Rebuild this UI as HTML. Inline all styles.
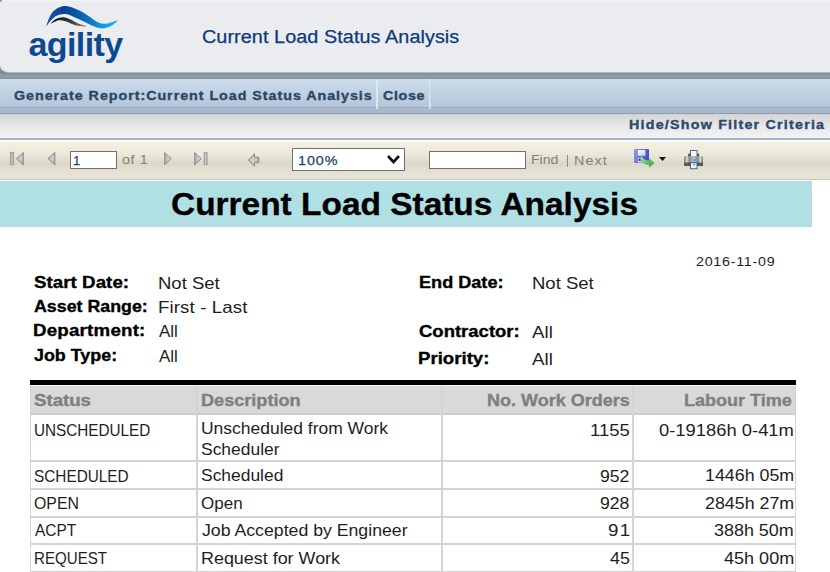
<!DOCTYPE html>
<html><head><meta charset="utf-8"><style>
html,body{margin:0;padding:0;}
body{width:830px;height:572px;overflow:hidden;position:relative;background:#fff;font-family:"Liberation Sans", sans-serif;}
.t{position:absolute;white-space:pre;transform-origin:0 0;}
.b{-webkit-text-stroke:0.35px currentColor;}
.m{-webkit-text-stroke:0.25px currentColor;}
.a{position:absolute;}
</style></head><body>
<!-- header panel -->
<div class="a" style="left:0;top:0;width:5px;height:5px;background:#7e8c9a"></div>
<div class="a" style="left:0;top:56px;width:830px;height:23px;background:linear-gradient(#7c8a98 0,#7c8a98 17px,#85929f 18px,#8d9aa8 19px,#909dab 20px,#8e9baa 21px,#8796a6 22px,#8796a6 23px)"></div>
<div class="a" style="left:0;top:0;width:840px;height:72px;background:#ebecf0;border-radius:4px 0 0 9px / 4px 0 0 7px;box-shadow:0 1px 0 #b4bac2"></div>
<div class="a" style="left:3px;top:0;width:830px;height:1px;background:#f1f2f5"></div>
<!-- logo -->
<svg class="a" style="left:0;top:0" width="140" height="72" viewBox="0 0 140 72">
 <defs>
  <linearGradient id="wb" x1="0" y1="0" x2="1" y2="0"><stop offset="0" stop-color="#1456a6"/><stop offset="0.25" stop-color="#0a4191"/><stop offset="0.55" stop-color="#0c6ab8"/><stop offset="0.8" stop-color="#0ea0e2"/><stop offset="1" stop-color="#22b2ee"/></linearGradient>
  <linearGradient id="wg" x1="0" y1="0" x2="1" y2="0"><stop offset="0" stop-color="#111"/><stop offset="0.5" stop-color="#333"/><stop offset="1" stop-color="#888"/></linearGradient>
 </defs>
 <path d="M46.40,26.10 C46.48,25.13 48.43,19.15 49.80,16.50 C51.17,13.85 52.35,11.93 54.60,10.20 C56.85,8.47 60.65,6.65 63.30,6.10 C65.95,5.55 68.10,6.30 70.50,6.90 C72.90,7.50 75.45,8.67 77.70,9.70 C79.95,10.73 81.93,11.87 84.00,13.10 C86.07,14.33 87.82,15.58 90.10,17.10 C92.38,18.62 95.17,21.10 97.70,22.20 C100.23,23.30 102.77,23.78 105.30,23.70 C107.83,23.62 110.85,22.28 112.90,21.70 C114.95,21.12 117.35,19.87 117.60,20.20 C117.85,20.53 116.03,22.52 114.40,23.70 C112.77,24.88 110.17,26.53 107.80,27.30 C105.43,28.07 103.15,28.73 100.20,28.30 C97.25,27.87 92.80,25.82 90.10,24.70 C87.40,23.58 86.87,22.97 84.00,21.60 C81.13,20.23 75.95,17.75 72.90,16.50 C69.85,15.25 67.87,14.42 65.70,14.10 C63.53,13.78 61.75,14.12 59.90,14.60 C58.05,15.08 56.37,15.72 54.60,17.00 C52.83,18.28 50.67,20.78 49.30,22.30 C47.93,23.82 46.32,27.07 46.40,26.10 Z" fill="url(#wb)"/>
 <path d="M51.00,23.40 C50.58,23.17 53.95,19.93 56.00,18.90 C58.05,17.87 60.88,17.12 63.30,17.20 C65.72,17.28 68.10,18.40 70.50,19.40 C72.90,20.40 74.98,22.03 77.70,23.20 C80.42,24.37 87.20,26.07 86.80,26.40 C86.40,26.73 78.82,26.05 75.30,25.20 C71.78,24.35 68.50,22.12 65.70,21.30 C62.90,20.48 60.95,19.95 58.50,20.30 C56.05,20.65 51.42,23.63 51.00,23.40 Z" fill="url(#wg)"/>
 <text x="28.5" y="56" font-family="Liberation Sans, sans-serif" font-weight="700" font-size="34" fill="#0b4a8e" letter-spacing="-0.6">agility</text>
</svg>
<!-- blue bar -->
<div class="a" style="left:0;top:79px;width:830px;height:28px;background:linear-gradient(#cfdcea,#c2d3e4 40%,#b6c8da 90%,#b3c5d8)"></div>
<div class="a" style="left:0;top:107px;width:830px;height:1px;background:#9babbd"></div>
<div class="a" style="left:0;top:108px;width:830px;height:5px;background:linear-gradient(#aabbcf,#a6b8cd)"></div>
<div class="a" style="left:0;top:113px;width:830px;height:1px;background:#8e9cad"></div>
<div class="a" style="left:376px;top:79px;width:2px;height:30px;background:#d6e7ee"></div>
<div class="a" style="left:429px;top:79px;width:1px;height:30px;background:#d6e7ee"></div><div class="a" style="left:430px;top:79px;width:1px;height:30px;background:#c8d9e6"></div>
<!-- grey band -->
<div class="a" style="left:0;top:114px;width:830px;height:24px;background:linear-gradient(#d3d3d3,#e6e6e6 45%,#f3f3f3)"></div>
<div class="a" style="left:0;top:138px;width:830px;height:2px;background:#a7b9cd"></div>
<div class="a" style="left:0;top:140px;width:830px;height:2px;background:#fbfbf8"></div>
<!-- toolbar -->
<div class="a" style="left:0;top:142px;width:830px;height:37px;background:linear-gradient(#f4f1e3,#ebe7d9 35%,#dcd8c9 58%,#e3dfd1 75%,#e8e4d6)"></div>
<div class="a" style="left:0;top:179px;width:830px;height:1px;background:#c9c6c0"></div>
<div class="a" style="left:0;top:180px;width:830px;height:1px;background:#fff"></div>
<!-- page input -->
<div class="a" style="left:70px;top:151px;width:45px;height:16px;border:1px solid #707070;background:#fff"></div>
<!-- zoom select -->
<div class="a" style="left:292px;top:148px;width:111px;height:21px;border:1px solid #707070;background:#fff"></div>
<svg class="a" style="left:385px;top:153px" width="17" height="12" viewBox="0 0 17 12"><path d="M3,3 L8.5,9 L14,3" fill="none" stroke="#111" stroke-width="2.6"/></svg>
<!-- find input -->
<div class="a" style="left:429px;top:151px;width:95px;height:16px;border:1px solid #707070;background:#fff"></div>
<div class="a" style="left:567px;top:155px;width:1px;height:12px;background:#8a8a8a"></div>
<!-- nav icons -->
<svg class="a" style="left:0;top:145px" width="220" height="30" viewBox="0 0 220 30">
 <defs>
  <linearGradient id="ig" x1="0" y1="0" x2="1" y2="0"><stop offset="0" stop-color="#a0a0a0"/><stop offset="0.45" stop-color="#cdcdcd"/><stop offset="1" stop-color="#9a9a9a"/></linearGradient>
  <radialGradient id="it" cx="0.6" cy="0.45" r="0.65"><stop offset="0" stop-color="#d2d2d2"/><stop offset="1" stop-color="#a4a4a4"/></radialGradient>
 </defs>
 <rect x="10.3" y="7.3" width="3.4" height="12.6" fill="url(#ig)" stroke="#969696" stroke-width="0.7"/>
 <path d="M23.4,7.4 L16.4,13.6 L23.4,19.9 Z" fill="url(#it)" stroke="#858585" stroke-width="0.8"/>
 <path d="M54.9,7.4 L47.9,13.6 L54.9,19.9 Z" fill="url(#it)" stroke="#858585" stroke-width="0.8"/>
 <path d="M164.6,7.6 L171.3,13.7 L164.6,19.9 Z" fill="url(#it)" stroke="#858585" stroke-width="0.8"/>
 <path d="M194.6,7.6 L201.3,13.7 L194.6,19.9 Z" fill="url(#it)" stroke="#858585" stroke-width="0.8"/>
 <rect x="204.1" y="7.6" width="3" height="12.3" fill="url(#ig)" stroke="#969696" stroke-width="0.7"/>
</svg>
<svg class="a" style="left:244px;top:150px" width="20" height="20" viewBox="0 0 20 20">
 <defs><radialGradient id="ar" cx="0.45" cy="0.5" r="0.6"><stop offset="0" stop-color="#d4d4d4"/><stop offset="1" stop-color="#a8a8a8"/></radialGradient></defs><path d="M4.2,10 L10.5,3.8 L10.5,7.2 L14.8,7.2 L14.8,12.6 L10.5,12.6 L10.5,16.3 Z" fill="url(#ar)" stroke="#858585" stroke-width="0.9"/>
</svg>
<!-- save icon -->
<svg class="a" style="left:630px;top:146px" width="40" height="25" viewBox="0 0 40 25">
 <defs>
  <linearGradient id="fl" x1="0" y1="0" x2="1" y2="0.3"><stop offset="0" stop-color="#9599f4"/><stop offset="0.5" stop-color="#6c70e0"/><stop offset="1" stop-color="#4a4cc0"/></linearGradient>
  <linearGradient id="lb" x1="0" y1="0" x2="1" y2="1"><stop offset="0" stop-color="#ffffff"/><stop offset="1" stop-color="#c9cdef"/></linearGradient>
  <linearGradient id="ga" x1="0" y1="0" x2="1" y2="1"><stop offset="0" stop-color="#9be89c"/><stop offset="1" stop-color="#2f9e44"/></linearGradient>
 </defs>
 <rect x="4" y="3" width="15" height="14" rx="0.6" fill="url(#fl)"/>
 <rect x="7.7" y="4" width="7.7" height="5.7" fill="url(#lb)"/>
 <rect x="8" y="12" width="5" height="4.5" fill="#d8daf2"/>
 <rect x="8.8" y="12.8" width="2" height="2" fill="#1c1c40"/>
 <path d="M11.8,10.2 C13.2,13.2 15.5,14.5 19,14.5 L19,12 L24.5,17 L19,21.7 L19,19 C14.5,19 11,16 10,12.2 Z" fill="url(#ga)"/>
 <path d="M29,11 L36,11 L32.5,15 Z" fill="#111"/>
</svg>
<!-- print icon -->
<svg class="a" style="left:680px;top:146px" width="28" height="26" viewBox="0 0 28 26">
 <defs>
  <linearGradient id="pb" x1="0" y1="0" x2="1" y2="0"><stop offset="0" stop-color="#6a6a6a"/><stop offset="0.14" stop-color="#dedede"/><stop offset="0.27" stop-color="#8a8a8a"/><stop offset="0.5" stop-color="#c4c4c4"/><stop offset="0.73" stop-color="#8a8a8a"/><stop offset="0.86" stop-color="#dedede"/><stop offset="1" stop-color="#6a6a6a"/></linearGradient>
 </defs>
 <rect x="8.2" y="7.7" width="11" height="3" fill="#4a4a4a"/>
 <rect x="10.5" y="4.5" width="6.5" height="6" fill="#f6f8fb" stroke="#4d6a8c" stroke-width="1"/>
 <rect x="4.2" y="10" width="18.8" height="10" rx="1.5" fill="url(#pb)"/>
 <rect x="4.2" y="16.4" width="18.8" height="3.6" rx="1" fill="#3a3a3a" opacity="0.75"/>
 <rect x="13.2" y="13.2" width="3.8" height="1.8" fill="#5a9ee6"/>
 <rect x="10.5" y="16.8" width="6.5" height="5.9" fill="#eef4fa" stroke="#4d6a8c" stroke-width="1"/>
 <rect x="13.3" y="17.8" width="1.6" height="1.6" fill="#4a8ad8"/>
</svg>
<!-- report title banner -->
<div class="a" style="left:0;top:181px;width:812px;height:46px;background:#b0dfe4"></div>
<!-- table -->
<div class="a" style="left:30px;top:380px;width:766px;height:5px;background:#000"></div>
<div class="a" style="left:30px;top:385px;width:766px;height:1px;background:#f4f4f4"></div>
<div class="a" style="left:30px;top:386px;width:766px;height:27px;background:#d9d9d9"></div>
<div class="a" style="left:30px;top:413px;width:766px;height:2px;background:#cdcdcd"></div>
<div class="a" style="left:30px;top:460px;width:766px;height:2px;background:#d4d4d4"></div>
<div class="a" style="left:30px;top:488px;width:766px;height:2px;background:#d4d4d4"></div>
<div class="a" style="left:30px;top:516px;width:766px;height:2px;background:#d4d4d4"></div>
<div class="a" style="left:30px;top:543px;width:766px;height:2px;background:#d4d4d4"></div>
<div class="a" style="left:30px;top:571px;width:766px;height:2px;background:#d4d4d4"></div>
<div class="a" style="left:30px;top:386px;width:1px;height:190px;background:#d4d4d4"></div>
<div class="a" style="left:196px;top:386px;width:2px;height:190px;background:#d4d4d4"></div>
<div class="a" style="left:441px;top:386px;width:2px;height:190px;background:#d4d4d4"></div>
<div class="a" style="left:632px;top:386px;width:2px;height:190px;background:#d4d4d4"></div>
<div class="a" style="left:795px;top:386px;width:1px;height:190px;background:#d4d4d4"></div>

<div class="t m" style="left:202px;top:28px;font-size:18px;line-height:18px;letter-spacing:0.064px;transform:scaleX(1.1);color:#0b3a7a">Current Load Status Analysis</div>
<div class="t b" style="left:14px;top:89px;font-size:13px;line-height:13px;font-weight:700;letter-spacing:0.871px;transform:scaleX(1.1);color:#2b4765">Generate Report:Current Load Status Analysis</div>
<div class="t b" style="left:383px;top:89px;font-size:13px;line-height:13px;font-weight:700;letter-spacing:0.568px;transform:scaleX(1.1);color:#2b4765">Close</div>
<div class="t b" style="left:629px;top:118px;font-size:13px;line-height:13px;font-weight:700;letter-spacing:1.098px;transform:scaleX(1.1);color:#2b4a6c">Hide/Show Filter Criteria</div>
<div class="t m" style="left:73px;top:154px;font-size:13px;line-height:13px;color:#1b3f73">1</div>
<div class="t" style="left:122px;top:153px;font-size:13px;line-height:13px;letter-spacing:0.576px;transform:scaleX(1.1);color:#7f7f7f">of 1</div>
<div class="t m" style="left:298px;top:154px;font-size:13px;line-height:13px;letter-spacing:0.848px;transform:scaleX(1.1);color:#1b3f73">100%</div>
<div class="t" style="left:531px;top:153px;font-size:13px;line-height:13px;transform:scaleX(1.0833);color:#808080">Find</div>
<div class="t" style="left:574px;top:154px;font-size:13px;line-height:13px;letter-spacing:1.03px;transform:scaleX(1.1);color:#808080">Next</div>
<div class="t b" style="left:171px;top:188px;font-size:32px;line-height:32px;font-weight:700;transform:scaleX(1.0449);color:#000000">Current Load Status Analysis</div>
<div class="t" style="left:696px;top:255px;font-size:13px;line-height:13px;letter-spacing:0.667px;transform:scaleX(1.1);color:#1e1e1e">2016-11-09</div>
<div class="t b" style="left:34px;top:274px;font-size:17px;line-height:17px;font-weight:700;letter-spacing:0.045px;transform:scaleX(1.1);color:#000000">Start Date:</div>
<div class="t b" style="left:34px;top:298px;font-size:17px;line-height:17px;font-weight:700;transform:scaleX(1.0467);color:#000000">Asset Range:</div>
<div class="t b" style="left:33px;top:322px;font-size:17px;line-height:17px;font-weight:700;letter-spacing:0.2px;transform:scaleX(1.1);color:#000000">Department:</div>
<div class="t b" style="left:34px;top:347px;font-size:17px;line-height:17px;font-weight:700;transform:scaleX(1.0513);color:#000000">Job Type:</div>
<div class="t b" style="left:419px;top:274px;font-size:17px;line-height:17px;font-weight:700;transform:scaleX(1.0649);color:#000000">End Date:</div>
<div class="t b" style="left:419px;top:323px;font-size:17px;line-height:17px;font-weight:700;transform:scaleX(1.0879);color:#000000">Contractor:</div>
<div class="t b" style="left:418px;top:350px;font-size:17px;line-height:17px;font-weight:700;transform:scaleX(1.0952);color:#000000">Priority:</div>
<div class="t" style="left:158px;top:275px;font-size:17px;line-height:17px;transform:scaleX(1.0893);color:#1e1e1e">Not Set</div>
<div class="t" style="left:158px;top:299px;font-size:17px;line-height:17px;letter-spacing:0.091px;transform:scaleX(1.1);color:#1e1e1e">First - Last</div>
<div class="t" style="left:159px;top:323px;font-size:17px;line-height:17px;color:#1e1e1e">All</div>
<div class="t" style="left:159px;top:348px;font-size:17px;line-height:17px;color:#1e1e1e">All</div>
<div class="t" style="left:532px;top:275px;font-size:17px;line-height:17px;transform:scaleX(1.0893);color:#1e1e1e">Not Set</div>
<div class="t" style="left:532px;top:324px;font-size:17px;line-height:17px;letter-spacing:0.091px;transform:scaleX(1.1);color:#1e1e1e">All</div>
<div class="t" style="left:532px;top:351px;font-size:17px;line-height:17px;letter-spacing:0.091px;transform:scaleX(1.1);color:#1e1e1e">All</div>
<div class="t b" style="left:34px;top:392px;font-size:17px;line-height:17px;font-weight:700;transform:scaleX(1.0962);color:#7f7f7f">Status</div>
<div class="t b" style="left:201px;top:392px;font-size:17px;line-height:17px;font-weight:700;transform:scaleX(1.0652);color:#7f7f7f">Description</div>
<div class="t b" style="left:487px;top:392px;font-size:17px;line-height:17px;font-weight:700;transform:scaleX(1.0602);color:#7f7f7f">No. Work Orders</div>
<div class="t b" style="left:684px;top:392px;font-size:17px;line-height:17px;font-weight:700;transform:scaleX(1.0594);color:#7f7f7f">Labour Time</div>
<div class="t" style="left:34px;top:422px;font-size:17px;line-height:17px;transform:scaleX(0.8984);color:#1e1e1e">UNSCHEDULED</div>
<div class="t" style="left:201px;top:420px;font-size:17px;line-height:17px;transform:scaleX(1.0276);color:#1e1e1e">Unscheduled from Work</div>
<div class="t" style="left:201px;top:441px;font-size:17px;line-height:17px;transform:scaleX(1.0265);color:#1e1e1e">Scheduler</div>
<div class="t" style="left:590px;top:422px;font-size:17px;line-height:17px;transform:scaleX(1.0857);color:#1e1e1e">1155</div>
<div class="t" style="left:659px;top:422px;font-size:17px;line-height:17px;transform:scaleX(1.0813);color:#1e1e1e">0-19186h 0-41m</div>
<div class="t" style="left:34px;top:468px;font-size:17px;line-height:17px;transform:scaleX(0.9029);color:#1e1e1e">SCHEDULED</div>
<div class="t" style="left:201px;top:467px;font-size:17px;line-height:17px;transform:scaleX(1.0253);color:#1e1e1e">Scheduled</div>
<div class="t" style="left:600px;top:468px;font-size:17px;line-height:17px;transform:scaleX(1.037);color:#1e1e1e">952</div>
<div class="t" style="left:705px;top:467px;font-size:17px;line-height:17px;transform:scaleX(1.0482);color:#1e1e1e">1446h 05m</div>
<div class="t" style="left:34px;top:495px;font-size:17px;line-height:17px;transform:scaleX(0.9348);color:#1e1e1e">OPEN</div>
<div class="t" style="left:201px;top:495px;font-size:17px;line-height:17px;color:#1e1e1e">Open</div>
<div class="t" style="left:600px;top:495px;font-size:17px;line-height:17px;transform:scaleX(1.037);color:#1e1e1e">928</div>
<div class="t" style="left:705px;top:495px;font-size:17px;line-height:17px;transform:scaleX(1.0482);color:#1e1e1e">2845h 27m</div>
<div class="t" style="left:35px;top:522px;font-size:17px;line-height:17px;transform:scaleX(0.9111);color:#1e1e1e">ACPT</div>
<div class="t" style="left:202px;top:522px;font-size:17px;line-height:17px;transform:scaleX(1.0406);color:#1e1e1e">Job Accepted by Engineer</div>
<div class="t" style="left:608px;top:522px;font-size:17px;line-height:17px;letter-spacing:1.182px;transform:scaleX(1.1);color:#1e1e1e">91</div>
<div class="t" style="left:714px;top:522px;font-size:17px;line-height:17px;transform:scaleX(1.0541);color:#1e1e1e">388h 50m</div>
<div class="t" style="left:34px;top:550px;font-size:17px;line-height:17px;transform:scaleX(0.8889);color:#1e1e1e">REQUEST</div>
<div class="t" style="left:201px;top:550px;font-size:17px;line-height:17px;transform:scaleX(1.0534);color:#1e1e1e">Request for Work</div>
<div class="t" style="left:610px;top:550px;font-size:17px;line-height:17px;transform:scaleX(1.0556);color:#1e1e1e">45</div>
<div class="t" style="left:724px;top:550px;font-size:17px;line-height:17px;transform:scaleX(1.0615);color:#1e1e1e">45h 00m</div>
</body></html>
